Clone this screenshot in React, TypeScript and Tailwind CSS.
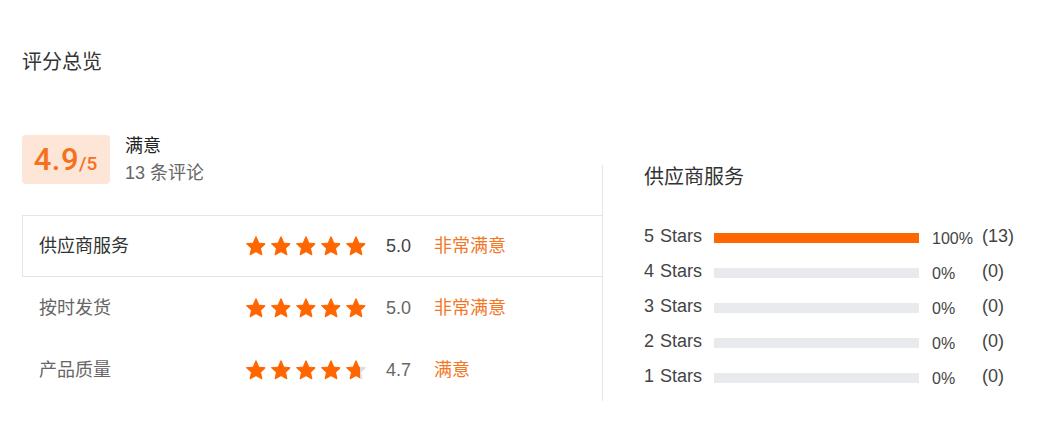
import React from "react";

type Row = { label: string; score: number; text: string; active?: boolean };

const rows: Row[] = [
  { label: "供应商服务", score: 5.0, text: "非常满意", active: true },
  { label: "按时发货", score: 5.0, text: "非常满意" },
  { label: "产品质量", score: 4.7, text: "满意" },
];

const dist = [
  { stars: 5, pct: "100%", count: 13 },
  { stars: 4, pct: "0%", count: 0 },
  { stars: 3, pct: "0%", count: 0 },
  { stars: 2, pct: "0%", count: 0 },
  { stars: 1, pct: "0%", count: 0 },
];

// fat five-point star, outer radius 10.5, inner 5
const STAR =
  "10,0 12.94,6.46 19.99,7.26 14.76,12.05 16.17,18.99 10,15.5 3.83,18.99 5.24,12.05 0.01,7.26 7.06,6.46";

function Star({ fill, id }: { fill: number; id: string }) {
  return (
    <svg width="20" height="20" viewBox="-0.6 -0.6 21.2 20.7" className="shrink-0">
      <defs>
        <linearGradient id={id} x1="0" x2="1" y1="0" y2="0">
          <stop offset={fill} stopColor="#ff6600" />
          <stop offset={fill} stopColor="#d9dce2" />
        </linearGradient>
      </defs>
      <polygon
        points={STAR}
        fill={`url(#${id})`}
        stroke={`url(#${id})`}
        strokeWidth="1.1"
        strokeLinejoin="round"
      />
    </svg>
  );
}

function Stars({ score, rowKey }: { score: number; rowKey: number }) {
  return (
    <div className="flex items-center gap-[5px]">
      {[0, 1, 2, 3, 4].map((i) => {
        const f = Math.max(0, Math.min(1, score - i));
        return <Star key={i} fill={f} id={`star-${rowKey}-${i}`} />;
      })}
    </div>
  );
}

export default function App() {
  return (
    <div className="w-[1050px] h-[425px] bg-white font-['Liberation_Sans','Noto_Sans_CJK_SC',sans-serif]">
      <div className="pl-[22px] pt-[48px]">
        <h2 className="text-[20px] leading-[28px] text-[#333]">评分总览</h2>

        <div className="flex mt-[59px]">
          {/* left: overall score + per-category rows */}
          <div className="w-[580px]">
            <div className="flex items-start">
              <div className="w-[88px] h-[49px] rounded-[4px] bg-[#fde5d7] flex items-baseline justify-center pt-[8px] pr-[1px] text-[#f5711c] font-['Roboto',sans-serif] font-medium">
                <span className="text-[31px] leading-[34px] tracking-[0.5px]">4.9</span>
                <span className="text-[19px] leading-[20px]">/5</span>
              </div>
              <div className="ml-[15px] -mt-[2px] leading-[27px]">
                <div className="text-[18px] text-[#222]">满意</div>
                <div className="text-[18px] text-[#666]">13 条评论</div>
              </div>
            </div>

            <div className="mt-[28px]">
              {rows.map((r, idx) => (
                <div
                  key={r.label}
                  className={
                    r.active
                      ? "h-[62px] flex items-center pl-[16px] border border-r-0 border-[#e5e5e5] text-[18px]"
                      : "h-[62px] flex items-center pl-[17px] text-[18px]"
                  }
                >
                  <div className={r.active ? "w-[207px] text-[#333]" : "w-[207px] text-[#666]"}>{r.label}</div>
                  <Stars score={r.score} rowKey={idx} />
                  <div className={r.active ? "ml-[20px] w-[48px] text-[#444]" : "ml-[20px] w-[48px] text-[#666]"}>
                    {r.score.toFixed(1)}
                  </div>
                  <div className="text-[#f5761f]">{r.text}</div>
                </div>
              ))}
            </div>
          </div>

          {/* right: star distribution */}
          <div className="mt-[30px] border-l border-[#e5e5e5] pl-[41px] flex-1">
            <h3 className="text-[20px] leading-[24px] text-[#333]">供应商服务</h3>
            <div className="mt-[30px]">
              {dist.map((d) => (
                <div key={d.stars} className="h-[35px] flex items-center text-[18px] text-[#444]">
                  <div className="w-[70px] flex">
                    <span>{d.stars}</span>
                    <span className="ml-[6px]">Stars</span>
                  </div>
                  <div className="w-[205px] h-[10px] bg-[#e9eaee] mt-[2px]">
                    <div className="h-full bg-[#ff6600]" style={{ width: d.pct }} />
                  </div>
                  <div className="ml-[13px] w-[50px] pt-[4px] text-[16px]">{d.pct}</div>
                  <div>({d.count})</div>
                </div>
              ))}
            </div>
          </div>
        </div>
      </div>
    </div>
  );
}
